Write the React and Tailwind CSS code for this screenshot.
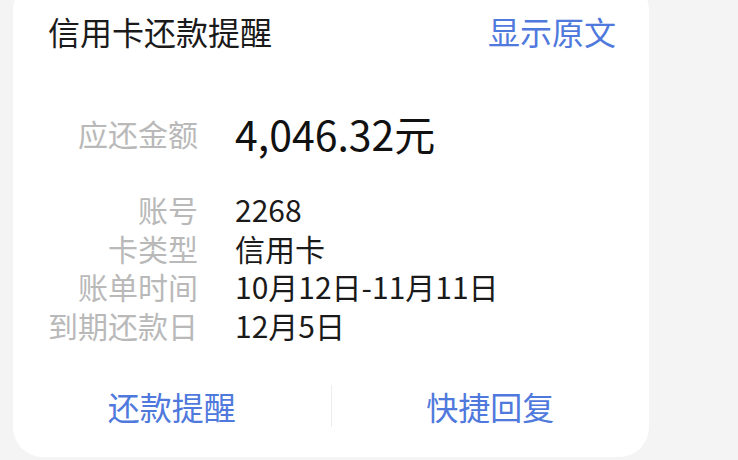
import React from 'react';

const rows = [
  ['账号', '2268'],
  ['卡类型', '信用卡'],
  ['账单时间', '10月12日-11月11日'],
  ['到期还款日', '12月5日'],
];

export default function App() {
  return (
    <div
      className="h-[460px] w-[738px] overflow-hidden bg-[#f4f4f4]"
      style={{ fontFamily: '"Noto Sans CJK SC", "Noto Sans", sans-serif' }}
    >
      <div className="ml-[13px] mt-[-20px] flex h-[477px] w-[636px] flex-col rounded-[30px] bg-white">
        {/* header */}
        <div className="flex h-[102px] items-center justify-between pl-[35px] pr-[33px]">
          <span className="text-[32px] leading-none text-[#1a1a1a]">信用卡还款提醒</span>
          <span className="text-[32px] leading-none text-[#4f79dc]">显示原文</span>
        </div>

        {/* amount */}
        <div className="mt-[26px] flex h-[50px] items-center">
          <span className="w-[185px] text-right text-[30px] leading-none text-[#b9b9b9]">应还金额</span>
          <span className="ml-[37px] text-[41px] font-normal leading-none text-[#111]">4,046.32元</span>
        </div>

        {/* details */}
        <div className="mt-[32px] flex flex-col">
          {rows.map(([k, v]) => (
            <div key={k} className="flex h-[38.5px] items-center">
              <span className="w-[185px] text-right text-[30px] leading-none text-[#b9b9b9]">{k}</span>
              <span className="ml-[37px] text-[30px] leading-none text-[#1a1a1a]">{v}</span>
            </div>
          ))}
        </div>

        {/* footer actions */}
        <div className="mt-[41px] flex h-[42px] items-center">
          <div className="flex flex-1 justify-center text-[32px] leading-none text-[#4f79dc]">还款提醒</div>
          <div className="h-[42px] w-px bg-[#ededed]"></div>
          <div className="flex flex-1 justify-center text-[32px] leading-none text-[#4f79dc]">快捷回复</div>
        </div>
      </div>
    </div>
  );
}
